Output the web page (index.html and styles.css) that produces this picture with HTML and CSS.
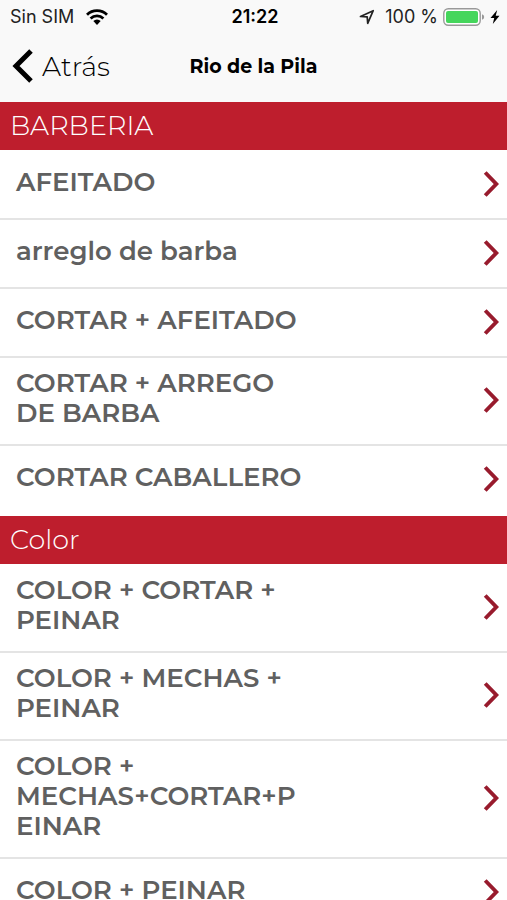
FILE: index.html
```html
<!DOCTYPE html>
<html lang="es">
<head>
<meta charset="utf-8">
<meta name="viewport" content="width=device-width, initial-scale=1">
<title>Rio de la Pila</title>
<link rel="stylesheet" href="styles.css">
</head>
<body>
<svg class="defs" aria-hidden="true"><symbol id="next" viewBox="0 0 16 28"><path d="M2.200 2.500 13.300 14 2.200 25.500" fill="none" stroke="#981b2d" stroke-width="3.900" stroke-linejoin="miter"/></symbol></svg>
<header class="top">
  <div class="status">
    <div class="carrier"><span>Sin SIM</span>
      <svg class="wifi" viewBox="0 0 22 16" aria-hidden="true"><g fill="none" stroke="#000" stroke-width="2.800"><path d="M1 5.800a14.300 14.300 0 0 1 20 0"/><path d="M4.600 9.500a9.200 9.200 0 0 1 12.800 0"/></g><path d="M7.300 12.100a5.300 5.300 0 0 1 7.400 0L11 15.900z"/></svg>
    </div>
    <time class="clock">21:22</time>
    <div class="power">
      <svg class="location" viewBox="0 0 16 16" aria-hidden="true"><path d="M1.500 7.500 14.200 1.700 8.700 14.300 8.200 7.900z" fill="none" stroke="#222" stroke-width="1.700" stroke-linejoin="round"/></svg>
      <span>100 %</span>
      <svg class="battery" viewBox="0 0 42 18" aria-hidden="true"><rect x=".8" y=".8" width="36.400" height="16.400" rx="4.500" fill="#fff" stroke="#999" stroke-width="1.400"/><rect x="3" y="3" width="32" height="12" rx="2" fill="#45d65c"/><path d="M39 6.200q2.200.8 2.200 2.800T39 11.800z" fill="#999"/></svg>
      <svg class="bolt" viewBox="0 0 10 16" aria-hidden="true"><path d="M7.200 1 .5 9h3.700L2.800 15 9.500 6.800H5.700z"/></svg>
    </div>
  </div>
  <nav class="bar">
    <a class="back" href="#"><svg viewBox="0 0 22 34" aria-hidden="true"><path d="M19 2 4 17 19 32" fill="none" stroke="#000" stroke-width="5"/></svg>Atrás</a>
    <h1>Rio de la Pila</h1>
  </nav>
</header>
<main>
  <section>
    <h2>BARBERIA</h2>
    <ul>
      <li><a href="#"><span>AFEITADO</span><svg><use href="#next"/></svg></a></li>
      <li><a href="#"><span>arreglo de barba</span><svg><use href="#next"/></svg></a></li>
      <li><a href="#"><span>CORTAR + AFEITADO</span><svg><use href="#next"/></svg></a></li>
      <li><a href="#"><span>CORTAR + ARREGO DE BARBA</span><svg><use href="#next"/></svg></a></li>
      <li><a href="#"><span>CORTAR CABALLERO</span><svg><use href="#next"/></svg></a></li>
    </ul>
  </section>
  <section>
    <h2>Color</h2>
    <ul>
      <li><a href="#"><span>COLOR + CORTAR + PEINAR</span><svg><use href="#next"/></svg></a></li>
      <li><a href="#"><span>COLOR + MECHAS + PEINAR</span><svg><use href="#next"/></svg></a></li>
      <li><a href="#"><span>COLOR +<br>MECHAS+CORTAR+P<wbr>EINAR</span><svg><use href="#next"/></svg></a></li>
      <li><a href="#"><span>COLOR + PEINAR</span><svg><use href="#next"/></svg></a></li>
    </ul>
  </section>
</main>
</body>
</html>
```
FILE: styles.css
```css
* { box-sizing: border-box; }
html { scrollbar-width: none; }
body {
  margin: 0;
  background: #fff;
  color: #000;
  font-family: Montserrat, Inter, sans-serif;
}
a { color: inherit; text-decoration: none; }
.defs { display: none; }
.top { background: #f9f9f9; }
.status {
  display: grid;
  grid-template-columns: 1fr auto 1fr;
  align-items: center;
  height: 34px;
  padding: 0 7px 0 10px;
  font: 18px/24px Inter, sans-serif;
  color: #222;
}
.carrier, .power { display: flex; align-items: center; }
.carrier { gap: 12px; }
.power { justify-content: flex-end; gap: 5px; }
.clock { font-weight: 600; color: #000; }
.wifi { width: 22px; height: 16px; }
.location { width: 16px; height: 16px; margin-right: 5px; }
.battery { width: 42px; height: 18px; }
.bolt { width: 10px; height: 16px; }
.bar {
  display: grid;
  grid-template-columns: 1fr auto 1fr;
  align-items: center;
  height: 68px;
  padding: 0 12px 4px;
}
.back {
  display: flex;
  align-items: center;
  gap: 8px;
  font-size: 27px;
  font-weight: 300;
}
.back svg { width: 22px; height: 34px; }
.bar h1 { margin: 0; font-size: 19px; font-weight: 700; }
h2 {
  margin: 0;
  padding: 0 10px;
  background: #be1e2d;
  color: #fff;
  font-size: 27px;
  font-weight: 300;
  line-height: 48px;
}
ul { margin: 0; padding: 1px 0; list-style: none; }
li a {
  display: flex;
  align-items: center;
  justify-content: space-between;
  min-height: 69px;
  padding: 0 8px 2px 16px;
  border-bottom: 2px solid #e4e4e4;
  color: #606060;
  font-size: 26px;
  font-weight: 600;
  line-height: 30px;
}
li:last-child a { border-bottom-color: #fff; }
li span { width: 60%; padding: 10px 0 14px; }
li svg { width: 16px; height: 28px; flex: none; }
```
